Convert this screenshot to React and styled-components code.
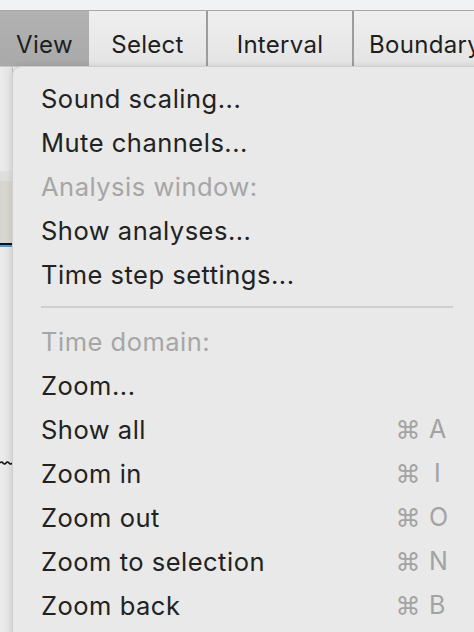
import React from 'react';
import styled, { createGlobalStyle } from 'styled-components';

const Global = createGlobalStyle`
  html, body {
    margin: 0;
    padding: 0;
    background: #f0f1f3;
    font-family: Inter, "Liberation Sans", sans-serif;
    -webkit-font-smoothing: antialiased;
  }
`;

const Screen = styled.div`
  position: relative;
  width: 474px;
  height: 632px;
  overflow: hidden;
  background: #f0f1f3;
`;

const TopStrip = styled.div`
  height: 10px;
  background: #f1f2f4;
  border-bottom: 1px solid #a9a9a9;
`;

const MenuBar = styled.div`
  display: flex;
  height: 55px;
  background: linear-gradient(#efefef, #e4e4e4);
  border-bottom: 1px solid #c8c8c8;
`;

const BarItem = styled.div`
  display: flex;
  align-items: center;
  justify-content: ${p => (p.$left ? 'flex-start' : 'center')};
  padding-left: ${p => (p.$left ? '15px' : '0')};
  width: ${p => p.$w}px;
  flex-shrink: 0;
  padding-top: 12px;
  box-sizing: border-box;
  font-size: 24px;
  letter-spacing: 0.3px;
  color: #1e1e1e;
  background: ${p => (p.$active ? 'linear-gradient(#b2b2b2, #a9a9a9)' : 'transparent')};
  border-right: ${p => (p.$sep ? '2px solid #9c9c9c' : 'none')};
  white-space: nowrap;
`;

const Backdrop = styled.div`
  display: flex;
  flex-direction: column;
  width: 12px;
  height: 566px;
  background: linear-gradient(90deg, #ececec, #e2e2e2);
  border-right: 1px solid #bdbdbd;
`;

const Band = styled.div`
  height: ${p => p.$h}px;
  background: ${p => p.$bg};
  flex-shrink: 0;
`;

const Squiggle = styled.svg`
  display: block;
  flex-shrink: 0;
`;

const Menu = styled.div`
  position: absolute;
  left: 12px;
  top: 66px;
  width: 480px;
  height: 600px;
  background: #e8e9e8;
  border-radius: 9px 9px 0 0;
  border-left: 1px solid #cfcfcf;
  border-top: 1px solid #cfcfcf;
  box-shadow: 0 0 6px rgba(0, 0, 0, 0.12);
  padding-top: 9px;
  box-sizing: border-box;
`;

const Item = styled.div`
  display: flex;
  align-items: center;
  height: 44px;
  padding-left: 28px;
  padding-right: 46px;
  font-size: 25.5px;
  letter-spacing: 0.5px;
  color: ${p => (p.$disabled ? '#a6a6a6' : '#222222')};
  white-space: nowrap;
`;

const Label = styled.span`
  flex: 1;
`;

const Shortcut = styled.span`
  display: flex;
  align-items: center;
  gap: 8px;
  color: #a3a3a3;
  font-size: 25px;
`;

const Cmd = styled.span`
  font-family: "DejaVu Sans", sans-serif;
  font-size: 25px;
  line-height: 1;
  position: relative;
  top: 1px;
`;

const Key = styled.span`
  width: 17px;
  text-align: center;
`;

const Separator = styled.div`
  height: 2px;
  background: #cfcfcf;
  margin: 10px 0 11px 28px;
  width: 412px;
`;

const items = [
  { label: 'Sound scaling...' },
  { label: 'Mute channels...' },
  { label: 'Analysis window:', disabled: true },
  { label: 'Show analyses...' },
  { label: 'Time step settings...' },
  { sep: true },
  { label: 'Time domain:', disabled: true },
  { label: 'Zoom...' },
  { label: 'Show all', key: 'A' },
  { label: 'Zoom in', key: 'I' },
  { label: 'Zoom out', key: 'O' },
  { label: 'Zoom to selection', key: 'N' },
  { label: 'Zoom back', key: 'B' },
];

export default function App() {
  return (
    <Screen>
      <Global />
      <TopStrip />
      <MenuBar>
        <BarItem $w={89} $active>View</BarItem>
        <BarItem $w={119} $sep>Select</BarItem>
        <BarItem $w={146} $sep>Interval</BarItem>
        <BarItem $w={140} $left>Boundary</BarItem>
      </MenuBar>
      <Backdrop>
        <Band $h={104} $bg="transparent" />
        <Band $h={10} $bg="#dedede" />
        <Band $h={62} $bg="#d6d6ce" />
        <Band $h={2} $bg="#111" />
        <Band $h={2} $bg="#4a9be0" />
        <Band $h={213} $bg="transparent" />
        <Squiggle width="12" height="6" viewBox="0 0 12 6">
          <path d="M0 3 Q1.5 1 3 3 T6 3 T9 3 T12 3" stroke="#111" strokeWidth="1.6" fill="none" />
        </Squiggle>
      </Backdrop>
      <Menu>
        {items.map((it, i) =>
          it.sep ? (
            <Separator key={i} />
          ) : (
            <Item key={i} $disabled={it.disabled}>
              <Label>{it.label}</Label>
              {it.key && (
                <Shortcut>
                  <Cmd>⌘</Cmd>
                  <Key>{it.key}</Key>
                </Shortcut>
              )}
            </Item>
          )
        )}
      </Menu>
    </Screen>
  );
}
